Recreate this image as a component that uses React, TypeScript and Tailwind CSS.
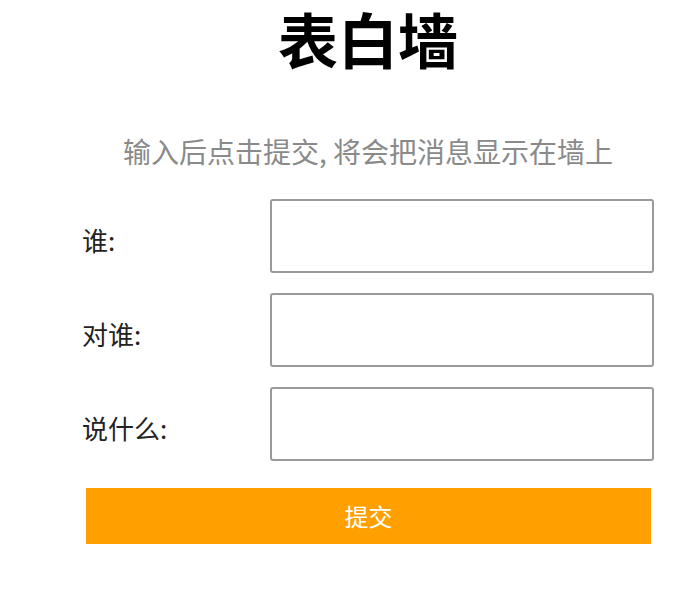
import React from "react";

const font = { fontFamily: '"Noto Sans CJK SC", "Noto Sans", sans-serif' };

export default function App() {
  const rows = ["谁:", "对谁:", "说什么:"];
  return (
    <div className="w-[688px] h-[604px] bg-white overflow-hidden" style={font}>
      <div className="ml-[82px] w-[572px] flex flex-col">
        <h1 className="-mt-[6px] text-center text-[60px] leading-[88px] font-bold text-black">表白墙</h1>
        <p className="mt-[52px] text-center text-[28px] leading-[34px] text-[#8a8a8a]">
          输入后点击提交, 将会把消息显示在墙上
        </p>
        <div className="mt-[31px] flex flex-col gap-[20px]">
          {rows.map((r) => (
            <div key={r} className="flex items-center">
              <label className="w-[188px] pt-[6px] text-[26px] text-[#222]">{r}</label>
              <input className="w-[384px] h-[74px] border-2 border-[#9a9a9a] rounded-[3px] outline-none" />
            </div>
          ))}
        </div>
        <button className="mt-[27px] ml-[4px] w-[565px] h-[56px] bg-[#ff9f00] text-white text-[24px]">
          提交
        </button>
      </div>
    </div>
  );
}
